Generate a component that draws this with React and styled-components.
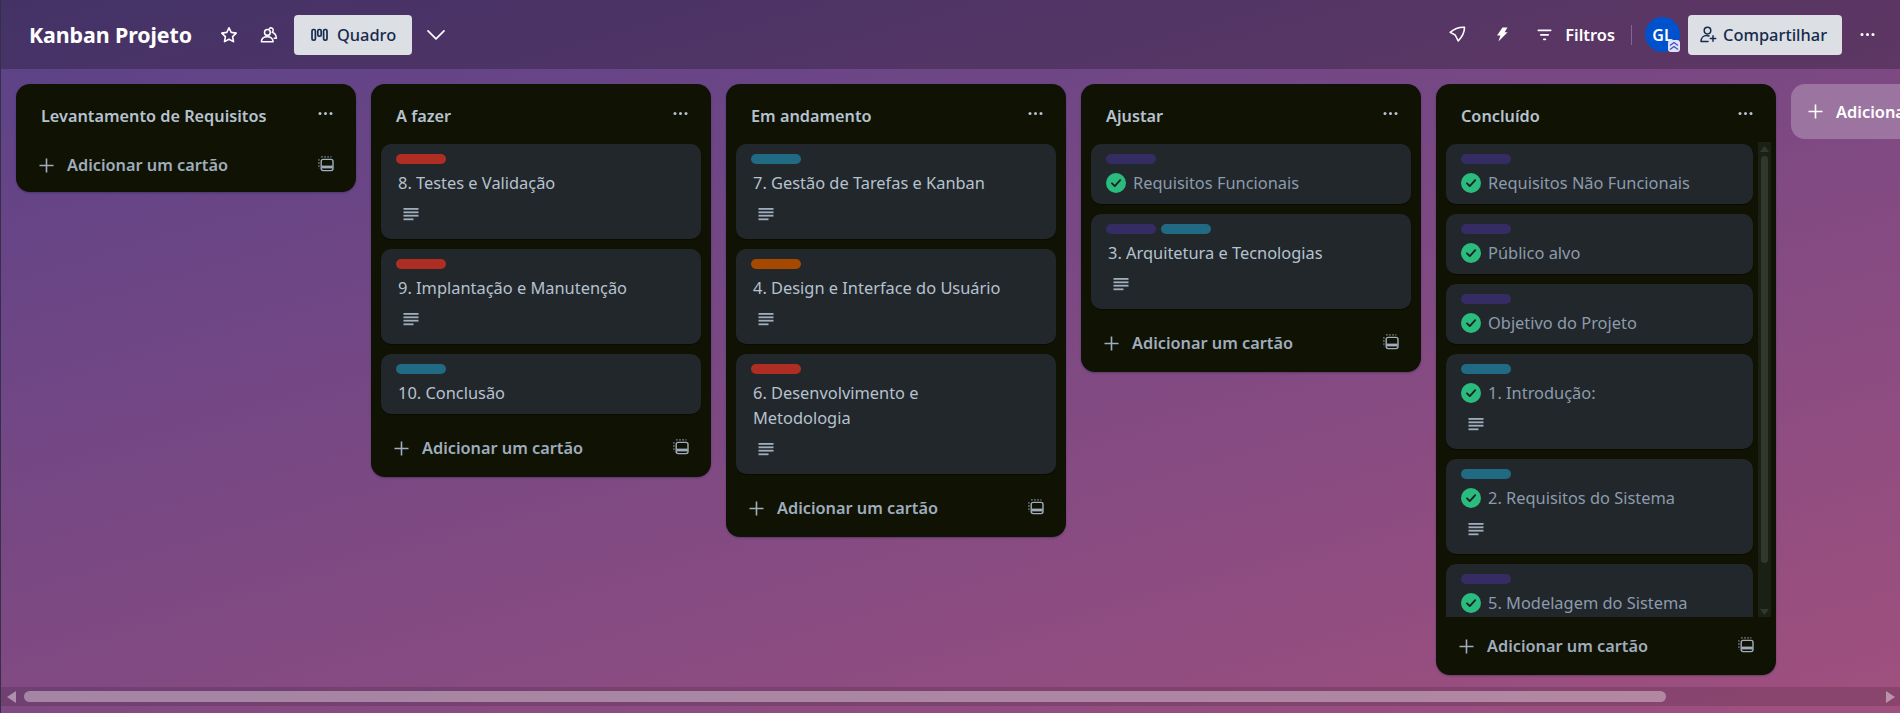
import React from "react";
import styled, { createGlobalStyle } from "styled-components";

const Global = createGlobalStyle`
  html, body { margin: 0; padding: 0; height: 100%; overflow: hidden; }
  body { font-family: "Noto Sans", "Liberation Sans", sans-serif; }
  * { box-sizing: border-box; }
`;

const Page = styled.div`
  height: 100vh;
  display: flex;
  flex-direction: column;
  overflow: hidden;
  border-left: 1px solid #34304a;
  background: linear-gradient(164deg, #5a4288, #a0507e);
`;

const TopBar = styled.header`
  flex: 0 0 69px;
  display: flex;
  align-items: center;
  padding: 0 23px 0 28px;
  background: rgba(0, 0, 0, 0.24);
  color: #fff;
`;

const BoardTitle = styled.h1`
  margin: 0 0 1px;
  font-size: 21.4px;
  font-weight: 700;
  letter-spacing: -0.1px;
  white-space: nowrap;
`;

const BarIcon = styled.span`
  display: inline-flex;
  align-items: center;
  justify-content: center;
  margin-left: ${(p) => p.$ml || 0}px;
  color: #fff;
`;

const LightButton = styled.button`
  height: 40px;
  border: 0;
  border-radius: 4px;
  background: #dcdfe4;
  color: #172b4d;
  font: 500 16.4px "Noto Sans", sans-serif;
  display: flex;
  align-items: center;
  gap: ${(p) => p.$gap}px;
  width: ${(p) => p.$w}px;
  margin-left: ${(p) => p.$ml}px;
  padding: 0 0 0 ${(p) => p.$pl}px;
  white-space: nowrap;
`;

const Spacer = styled.div`
  flex: 1;
`;

const FilterLabel = styled.span`
  font-size: 16.4px;
  font-weight: 600;
  margin-left: 13px;
`;

const Divider = styled.div`
  width: 1px;
  height: 20px;
  background: rgba(255, 255, 255, 0.25);
  margin: 0 13px 0 16px;
`;

const Avatar = styled.div`
  position: relative;
  width: 35px;
  height: 35px;
  border-radius: 50%;
  background: #0052cc;
  color: #fff;
  font-size: 16px;
  font-weight: 600;
  display: flex;
  align-items: center;
  justify-content: center;
`;

const AvatarBadge = styled.span`
  position: absolute;
  right: 0;
  bottom: 0;
  width: 12px;
  height: 12px;
  border-radius: 3px;
  background: #dfe1f5;
  display: flex;
  align-items: center;
  justify-content: center;
`;

const Board = styled.main`
  flex: 1;
  min-height: 0;
  display: flex;
  align-items: flex-start;
  gap: 15px;
  padding: 15px 0 0 15px;
  overflow: hidden;
`;

const Column = styled.section`
  flex: 0 0 340px;
  background: #101204;
  border-radius: 14px;
  box-shadow: 0 1px 2px rgba(9, 30, 66, 0.35);
  padding-bottom: ${(p) => (p.$empty ? 8 : 10)}px;
`;

const ColumnHead = styled.div`
  height: 60px;
  display: flex;
  align-items: center;
  justify-content: space-between;
  padding: 4px 23px 0 25px;
`;

const ColumnTitle = styled.h2`
  margin: 0;
  font-size: 16.25px;
  font-weight: 600;
  color: #b6c2cf;
  white-space: nowrap;
`;

const HeadDots = styled.span`
  display: flex;
  color: #b6c2cf;
  margin-top: -6px;
`;

const CardStack = styled.div`
  display: flex;
  flex-direction: column;
  gap: 10px;
  padding: 0 10px 13px;
  &:empty { padding-bottom: 0; margin-bottom: 1px; }
`;

const ScrollWrap = styled.div`
  display: flex;
  gap: 5px;
  padding: 0 5px 0 10px;
  margin-bottom: 10px;
`;

const ScrollList = styled.div`
  flex: 1;
  height: 473px;
  overflow: hidden;
  display: flex;
  flex-direction: column;
  gap: 10px;
`;

const VTrack = styled.div`
  flex: 0 0 13px;
  height: 475px;
  margin-top: -2px;
  background: #1b2015;
  display: flex;
  flex-direction: column;
  align-items: center;
  justify-content: space-between;
  padding: 4px 0 2px;
`;

const VThumb = styled.div`
  width: 7px;
  height: 407px;
  border-radius: 4px;
  background: #30382d;
  margin-bottom: 42px;
`;

const Card = styled.article`
  flex: 0 0 auto;
  background: #22272b;
  border-radius: 10px;
  padding: 10px 15px 9px;
  box-shadow: 0 1px 1px rgba(0, 0, 0, 0.4);
`;

const Labels = styled.div`
  display: flex;
  gap: 5px;
`;

const Label = styled.span`
  width: 50px;
  height: 10px;
  border-radius: 5px;
  background: ${(p) => p.$c};
`;

const CardTitle = styled.div`
  display: flex;
  align-items: flex-start;
  gap: 7px;
  margin-top: 6px;
  padding: 0 32px 0 2px;
  margin-left: ${(p) => (p.$done ? -2 : 0)}px;
  font-size: 16.4px;
  line-height: 25px;
  color: ${(p) => (p.$done ? "#8c9bab" : "#b6c2cf")};
`;

const DoneMark = styled.span`
  flex: 0 0 20px;
  height: 20px;
  margin-top: 3px;
  display: flex;
`;

const CardBadges = styled.div`
  height: 35px;
  padding: 13px 0 0 7px;
  color: #9fadbc;
  display: flex;
  align-items: flex-start;
`;

const Footer = styled.div`
  height: 38px;
  margin-top: 2px;
  display: flex;
  align-items: center;
  padding: 0 22px 0 23px;
  color: #9fadbc;
`;

const AddText = styled.span`
  flex: 1;
  margin-left: 13px;
  font-size: 16.3px;
  font-weight: 600;
  margin-top: -1px;
  white-space: nowrap;
`;

const AddList = styled.div`
  flex: 0 0 340px;
  height: 55px;
  border-radius: 14px;
  background: rgba(255, 255, 255, 0.24);
  color: #fff;
  display: flex;
  align-items: center;
  padding: 0 17px;
  gap: 13px;
  font-size: 16.4px;
  font-weight: 600;
  white-space: nowrap;
`;

const HBar = styled.div`
  flex: 0 0 19px;
  margin-bottom: 7px;
  background: rgba(0, 0, 0, 0.13);
  display: flex;
  align-items: center;
  justify-content: space-between;
  padding: 0 5px 0 6px;
`;

const HThumb = styled.div`
  width: 1642px;
  height: 11px;
  border-radius: 6px;
  background: rgba(255, 255, 255, 0.36);
  margin-right: 220px;
  margin-left: 8px;
`;

const ArrowShape = styled.svg`
  display: block;
  flex: none;
  fill: ${(p) => p.$fill};
`;

const Star = () => (
  <svg width="18" height="18" viewBox="0 0 18 18" fill="none" stroke="currentColor" strokeWidth="1.6" strokeLinejoin="round">
    <path d="M9 1.8l2.2 4.6 5 .7-3.6 3.5.9 5L9 13.2l-4.5 2.4.9-5L1.8 7.1l5-.7z" />
  </svg>
);
const People = () => (
  <svg width="18" height="18" viewBox="0 0 18 18" fill="none" stroke="currentColor" strokeWidth="1.5" strokeLinejoin="round" strokeLinecap="round">
    <circle cx="7.4" cy="6.4" r="2.9" />
    <path d="M1.4 15.8c0-3 2.4-5 6-5s5.4 2 5.8 5z" />
    <path d="M9.4 2.6c1-1.3 3.8-.8 3.8 1.6 0 .9-.4 1.6-1 2.1 2.4.8 4 3.1 4.2 5.9h-2.2" />
  </svg>
);
const BoardGlyph = () => (
  <svg width="17" height="14" viewBox="0 0 17 14" fill="none" stroke="currentColor" strokeWidth="1.7">
    <rect x="1" y="1.5" width="3.4" height="10.6" rx="1.4" />
    <rect x="6.8" y="1.5" width="3.4" height="6.6" rx="1.4" />
    <rect x="12.6" y="1.5" width="3.4" height="10.6" rx="1.4" />
  </svg>
);
const Chevron = () => (
  <svg width="18" height="18" viewBox="0 0 18 18" fill="none" stroke="currentColor" strokeWidth="1.7" strokeLinecap="round" strokeLinejoin="round">
    <path d="M1 4.8L9 12.8l8-8" />
  </svg>
);
const Plane = () => (
  <svg width="17" height="17" viewBox="0 0 17 17" fill="none" stroke="currentColor" strokeWidth="1.6" strokeLinejoin="round">
    <path d="M15.5 1.2C11 1 5 3 1.2 6.4L6.2 9l3 6C12.5 11.5 15.5 6 15.5 1.2z" />
  </svg>
);
const Bolt = () => (
  <svg width="12" height="15" viewBox="0 0 12 15" fill="currentColor">
    <path d="M6.5.5H11.5L8.6 5.2h3L2.4 14.5 4.4 8.4H1z" />
  </svg>
);
const FilterGlyph = () => (
  <svg width="15" height="12" viewBox="0 0 15 12" fill="currentColor">
    <rect x="0.5" y="0.5" width="14" height="1.7" rx="0.8" />
    <rect x="3" y="5" width="9" height="1.7" rx="0.8" />
    <rect x="6" y="9.5" width="3.2" height="1.7" rx="0.8" />
  </svg>
);
const Dots = ({ size = 15 }) => (
  <svg width={size} height="5" viewBox="0 0 15 5" fill="currentColor">
    <circle cx="2" cy="2.5" r="1.5" />
    <circle cx="7.5" cy="2.5" r="1.5" />
    <circle cx="13" cy="2.5" r="1.5" />
  </svg>
);
const UserPlus = () => (
  <svg width="17" height="17" viewBox="0 0 17 17" fill="none" stroke="currentColor" strokeWidth="1.5" strokeLinecap="round" strokeLinejoin="round">
    <circle cx="7.5" cy="4.6" r="3.3" />
    <path d="M1 15.5c0-3.6 2.4-6 5.6-6 1 0 1.7.2 2.4.5M1 15.5h7" />
    <path d="M13 9.8v5.4M10.3 12.5h5.4" />
  </svg>
);
const Plus = () => (
  <svg width="15" height="15" viewBox="0 0 15 15" fill="none" stroke="currentColor" strokeWidth="1.6" style={{ flex: "none" }}>
    <path d="M7.5 0.5v14M0.5 7.5h14" />
  </svg>
);
const Template = () => (
  <svg width="16" height="16" viewBox="0 0 16 16" fill="none" stroke="currentColor" style={{ flex: "none", marginTop: -3 }}>
    <rect x="3.2" y="3.4" width="11.8" height="11.2" rx="2" strokeWidth="1.4" />
    <path d="M3.5 9.6h11.2v2.8H3.5z" fill="currentColor" stroke="none" />
    <path d="M3 .9h10.5M.9 3v9.5" strokeWidth="1.2" strokeDasharray="1.8 1.3" opacity="0.7" />
  </svg>
);
const DescLines = () => (
  <svg width="16" height="13" viewBox="0 0 16 13" fill="currentColor">
    <rect x="0.5" y="0" width="15" height="1.8" />
    <rect x="0.5" y="3.4" width="15" height="1.8" />
    <rect x="0.5" y="6.8" width="15" height="1.8" />
    <rect x="0.5" y="10.4" width="10" height="1.8" />
  </svg>
);
const Check = () => (
  <svg width="20" height="20" viewBox="0 0 20 20">
    <circle cx="10" cy="10" r="10" fill="#2abb7f" />
    <path d="M6 10.3l2.8 2.8L14.2 7.2" fill="none" stroke="#1d2125" strokeWidth="1.9" strokeLinecap="round" strokeLinejoin="round" />
  </svg>
);

const PURPLE = "#352c63";
const TEAL = "#206a83";
const RED = "#ae2e24";
const ORANGE = "#a54800";

const columns = [
  { title: "Levantamento de Requisitos", cards: [] },
  {
    title: "A fazer",
    cards: [
      { l: [RED], t: "8. Testes e Validação", d: true },
      { l: [RED], t: "9. Implantação e Manutenção", d: true },
      { l: [TEAL], t: "10. Conclusão" },
    ],
  },
  {
    title: "Em andamento",
    cards: [
      { l: [TEAL], t: "7. Gestão de Tarefas e Kanban", d: true },
      { l: [ORANGE], t: "4. Design e Interface do Usuário", d: true },
      { l: [RED], t: "6. Desenvolvimento e Metodologia", d: true },
    ],
  },
  {
    title: "Ajustar",
    cards: [
      { l: [PURPLE], t: "Requisitos Funcionais", done: true },
      { l: [PURPLE, TEAL], t: "3. Arquitetura e Tecnologias", d: true },
    ],
  },
  {
    title: "Concluído",
    scroll: true,
    cards: [
      { l: [PURPLE], t: "Requisitos Não Funcionais", done: true },
      { l: [PURPLE], t: "Público alvo", done: true },
      { l: [PURPLE], t: "Objetivo do Projeto", done: true },
      { l: [TEAL], t: "1. Introdução:", done: true, d: true },
      { l: [TEAL], t: "2. Requisitos do Sistema", done: true, d: true },
      { l: [PURPLE], t: "5. Modelagem do Sistema", done: true, d: true },
    ],
  },
];

const TaskCard = ({ card }) => (
  <Card>
    <Labels>
      {card.l.map((c, i) => (
        <Label key={i} $c={c} />
      ))}
    </Labels>
    <CardTitle $done={card.done}>
      {card.done && (
        <DoneMark>
          <Check />
        </DoneMark>
      )}
      <span>{card.t}</span>
    </CardTitle>
    {card.d && (
      <CardBadges>
        <DescLines />
      </CardBadges>
    )}
  </Card>
);

const List = ({ col }) => (
  <Column $empty={col.cards.length === 0}>
    <ColumnHead>
      <ColumnTitle>{col.title}</ColumnTitle>
      <HeadDots>
        <Dots />
      </HeadDots>
    </ColumnHead>
    {col.scroll ? (
      <ScrollWrap>
        <ScrollList>
          {col.cards.map((c) => (
            <TaskCard key={c.t} card={c} />
          ))}
        </ScrollList>
        <VTrack>
          <ArrowShape width="9" height="6" viewBox="0 0 9 6" $fill="#30382d">
            <path d="M4.5 0L9 6H0z" />
          </ArrowShape>
          <VThumb />
          <ArrowShape width="9" height="6" viewBox="0 0 9 6" $fill="#30382d">
            <path d="M4.5 6L9 0H0z" />
          </ArrowShape>
        </VTrack>
      </ScrollWrap>
    ) : (
      <CardStack>
        {col.cards.map((c) => (
          <TaskCard key={c.t} card={c} />
        ))}
      </CardStack>
    )}
    <Footer>
      <Plus />
      <AddText>Adicionar um cartão</AddText>
      <Template />
    </Footer>
  </Column>
);

export default function App() {
  return (
    <>
      <Global />
      <Page>
        <TopBar>
          <BoardTitle>Kanban Projeto</BoardTitle>
          <BarIcon $ml={28}>
            <Star />
          </BarIcon>
          <BarIcon $ml={22}>
            <People />
          </BarIcon>
          <LightButton $w={118} $ml={16} $pl={17} $gap={9}>
            <BoardGlyph />
            Quadro
          </LightButton>
          <BarIcon $ml={15}>
            <Chevron />
          </BarIcon>
          <Spacer />
          <BarIcon>
            <Plane />
          </BarIcon>
          <BarIcon $ml={30}>
            <Bolt />
          </BarIcon>
          <BarIcon $ml={29}>
            <FilterGlyph />
          </BarIcon>
          <FilterLabel>Filtros</FilterLabel>
          <Divider />
          <Avatar>
            GL
            <AvatarBadge>
              <svg width="10" height="10" viewBox="0 0 10 10" fill="none" stroke="#3d4fc4" strokeWidth="1.3">
                <path d="M1 4.5L5 1.5l4 3M1 8.5l4-3 4 3" />
              </svg>
            </AvatarBadge>
          </Avatar>
          <LightButton $w={154} $ml={8} $pl={12} $gap={6}>
            <UserPlus />
            Compartilhar
          </LightButton>
          <BarIcon $ml={16}>
            <Dots size={19} />
          </BarIcon>
        </TopBar>
        <Board>
          {columns.map((c) => (
            <List key={c.title} col={c} />
          ))}
          <AddList>
            <Plus />
            Adicionar outra lista
          </AddList>
        </Board>
        <HBar>
          <ArrowShape width="9" height="12" viewBox="0 0 9 12" $fill="rgba(255,255,255,.42)">
            <path d="M9 0v12L0 6z" />
          </ArrowShape>
          <HThumb />
          <ArrowShape width="9" height="12" viewBox="0 0 9 12" $fill="rgba(255,255,255,.42)">
            <path d="M0 0v12l9-6z" />
          </ArrowShape>
        </HBar>
      </Page>
    </>
  );
}
